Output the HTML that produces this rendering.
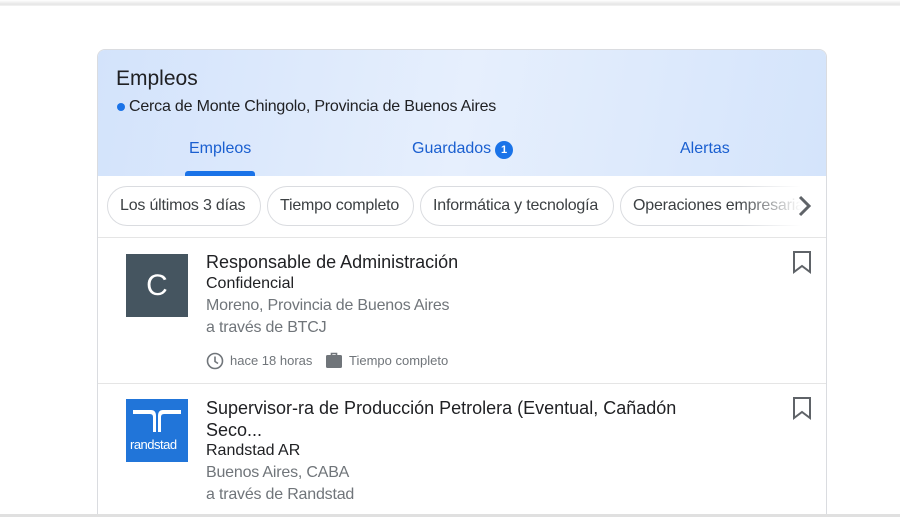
<!DOCTYPE html>
<html style="width:900px;height:517px;overflow:hidden"><head><meta charset="utf-8"><style>
*{margin:0;padding:0;box-sizing:border-box}
body{width:900px;height:517px;overflow:hidden;background:#fff;font-family:"Liberation Sans",Arial,sans-serif;position:relative}
.topbar{position:absolute;left:0;top:0;width:900px;height:6px;background:linear-gradient(#fff,#e6e6e6 70%,#f4f4f4)}
.card{position:absolute;left:97px;top:49px;width:730px;height:470px;border:1px solid #dadce0;border-bottom:none;border-radius:8px 8px 0 0;overflow:hidden;background:#fff}
.head{position:absolute;left:0;top:0;width:730px;height:126px;background:linear-gradient(100deg,#d3e3fb 0%,#e6effd 50%,#d4e4fb 100%)}
.t{position:absolute;white-space:nowrap}
.tab{color:#1a5fd0;font-size:16px}
.chip{position:absolute;top:136px;height:40px;border:1px solid #dadce0;border-radius:20px;font-size:16px;color:#3c4043;line-height:38px;padding:0 12px;background:#fff;white-space:nowrap;letter-spacing:-0.2px}
.hr{position:absolute;left:0;width:730px;height:1px;background:#e5e5e5}
.dark{color:#202124}
.gray{color:#70757a}
</style></head><body>
<div class="topbar"></div>
<div class="card">
<div class="head"></div>
<div class="t dark" style="left:18px;top:17px;font-size:21px">Empleos</div>
<div style="position:absolute;left:19px;top:53px;width:8px;height:8px;border-radius:50%;background:#1a73e8"></div>
<div class="t dark" style="left:31px;top:48px;font-size:16px;letter-spacing:-0.2px">Cerca de Monte Chingolo, Provincia de Buenos Aires</div>
<div class="t tab" style="left:91px;top:90px">Empleos</div>
<div style="position:absolute;left:87px;top:121px;width:70px;height:5px;background:#1a73e8;border-radius:3px 3px 0 0"></div>
<div class="t tab" style="left:314px;top:90px">Guardados</div>
<div style="position:absolute;left:397px;top:91px;width:18px;height:18px;border-radius:50%;background:#1a73e8;color:#fff;font-size:11px;font-weight:bold;text-align:center;line-height:18px">1</div>
<div class="t tab" style="left:582px;top:90px">Alertas</div>

<div class="chip" style="left:9px;width:154px">Los últimos 3 días</div>
<div class="chip" style="left:169px;width:147px">Tiempo completo</div>
<div class="chip" style="left:322px;width:194px">Informática y tecnología</div>
<div class="chip" style="left:522px;width:240px">Operaciones empresariales</div>
<div style="position:absolute;left:640px;top:130px;width:90px;height:50px;background:linear-gradient(90deg,rgba(255,255,255,0),#fff 70%)"></div>
<svg style="position:absolute;left:697px;top:144px" width="20" height="24" viewBox="0 0 20 24"><path d="M5 3 L14 12 L5 21" fill="none" stroke="#5f6368" stroke-width="3"/></svg>

<div class="hr" style="top:187px"></div>
<div style="position:absolute;left:28px;top:204px;width:62px;height:63px;background:#455560;color:#fff;font-size:30px;text-align:center;line-height:63px">C</div>
<div class="t dark" style="left:108px;top:202px;font-size:18px">Responsable de Administración</div>
<div class="t dark" style="left:108px;top:225px;font-size:16px">Confidencial</div>
<div class="t gray" style="left:108px;top:247px;font-size:16px;letter-spacing:-0.2px">Moreno, Provincia de Buenos Aires</div>
<div class="t gray" style="left:108px;top:269px;font-size:16px;letter-spacing:-0.2px">a través de BTCJ</div>
<svg style="position:absolute;left:108px;top:302px" width="18" height="18" viewBox="0 0 18 18"><circle cx="9" cy="9" r="7.5" fill="none" stroke="#70757a" stroke-width="1.6"/><path d="M9 4.5V9.5L12 11.5" fill="none" stroke="#70757a" stroke-width="1.6"/></svg>
<div class="t gray" style="left:132px;top:303px;font-size:13px">hace 18 horas</div>
<svg style="position:absolute;left:227px;top:301px" width="18" height="18" viewBox="0 0 18 18"><path d="M6.5 4V2.5h5V4" fill="none" stroke="#70757a" stroke-width="1.6"/><rect x="1" y="4" width="16" height="13" rx="1.5" fill="#70757a"/></svg>
<div class="t gray" style="left:251px;top:303px;font-size:13px">Tiempo completo</div>
<svg style="position:absolute;left:694px;top:200px" width="20" height="24" viewBox="0 0 20 24"><path d="M2 2H18V22L10 16L2 22Z" fill="none" stroke="#5f6368" stroke-width="2"/></svg>

<div class="hr" style="top:333px"></div>
<div style="position:absolute;left:28px;top:349px;width:62px;height:63px;background:#2175d9"></div>
<svg style="position:absolute;left:28px;top:349px" width="62" height="63" viewBox="0 0 62 63"><path d="M7 11H25Q30 11 30 17V33H27V18Q27 15 24 15H7Z M55 11H37Q32 11 32 17V33H35V18Q35 15 38 15H55Z" fill="#fff"/></svg>
<div class="t" style="left:32px;top:387px;font-size:13px;color:#fff;letter-spacing:-0.5px">randstad</div>
<div class="t dark" style="left:108px;top:348px;font-size:18px">Supervisor-ra de Producción Petrolera (Eventual, Cañadón</div>
<div class="t dark" style="left:108px;top:370px;font-size:18px">Seco...</div>
<div class="t dark" style="left:108px;top:392px;font-size:16px">Randstad AR</div>
<div class="t gray" style="left:108px;top:414px;font-size:16px;letter-spacing:-0.2px">Buenos Aires, CABA</div>
<div class="t gray" style="left:108px;top:436px;font-size:16px;letter-spacing:-0.2px">a través de Randstad</div>
<svg style="position:absolute;left:694px;top:346px" width="20" height="24" viewBox="0 0 20 24"><path d="M2 2H18V22L10 16L2 22Z" fill="none" stroke="#5f6368" stroke-width="2"/></svg>
</div>
<div style="position:absolute;left:0;top:514px;width:900px;height:3px;background:#e0e0e0"></div>
</body></html>
